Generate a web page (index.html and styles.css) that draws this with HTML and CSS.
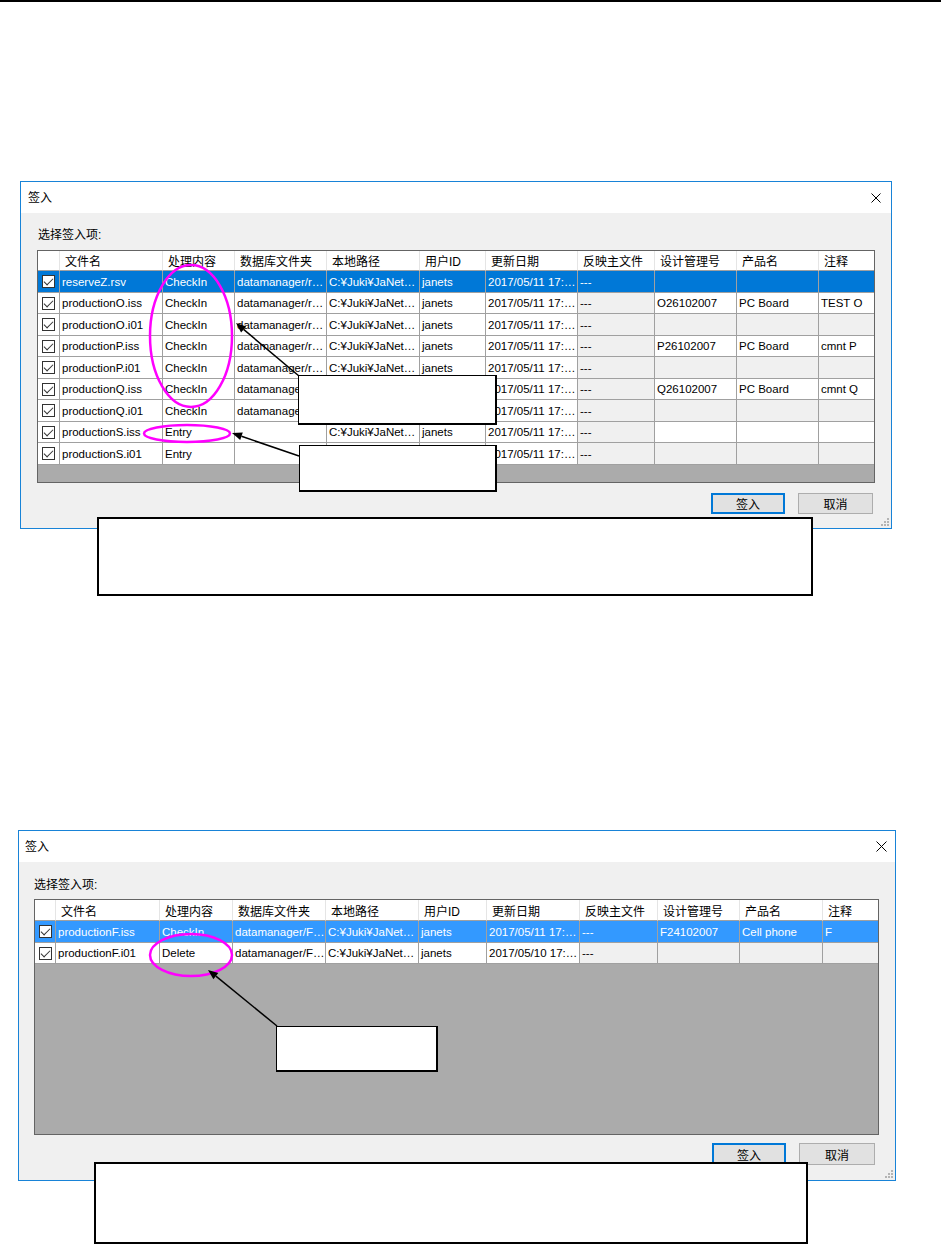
FILE: index.html
```html
<!DOCTYPE html>
<html lang="zh">
<head>
<meta charset="utf-8">
<title>签入</title>
<link rel="stylesheet" href="styles.css">
</head>
<body>
<div class="page">
  <div class="rule"></div>

  <section class="dialog d1">
    <header class="titlebar">
      <span class="title">签入</span>
      <svg class="close" width="10" height="10" viewBox="0 0 10 10"><path d="M0.5 0.5 L9.5 9.5 M9.5 0.5 L0.5 9.5" stroke="#000" stroke-width="1" fill="none"/></svg>
    </header>
    <div class="body">
      <div class="label">选择签入项:</div>
      <div class="grid">
        <div class="row head"><div></div><div>文件名</div><div>处理内容</div><div>数据库文件夹</div><div>本地路径</div><div>用户ID</div><div>更新日期</div><div>反映主文件</div><div>设计管理号</div><div>产品名</div><div>注释</div></div>
        <div class="row sel"><div class="ck"><span class="box"></span></div><div>reserveZ.rsv</div><div>CheckIn</div><div>datamanager/r…</div><div>C:¥Juki¥JaNet…</div><div>janets</div><div>2017/05/11 17:…</div><div>---</div><div></div><div></div><div></div></div>
        <div class="row"><div class="ck"><span class="box"></span></div><div>productionO.iss</div><div>CheckIn</div><div>datamanager/r…</div><div>C:¥Juki¥JaNet…</div><div>janets</div><div>2017/05/11 17:…</div><div class="g">---</div><div>O26102007</div><div>PC Board</div><div>TEST O</div></div>
        <div class="row"><div class="ck"><span class="box"></span></div><div>productionO.i01</div><div>CheckIn</div><div>datamanager/r…</div><div>C:¥Juki¥JaNet…</div><div>janets</div><div>2017/05/11 17:…</div><div class="g">---</div><div class="g"></div><div class="g"></div><div class="g"></div></div>
        <div class="row"><div class="ck"><span class="box"></span></div><div>productionP.iss</div><div>CheckIn</div><div>datamanager/r…</div><div>C:¥Juki¥JaNet…</div><div>janets</div><div>2017/05/11 17:…</div><div class="g">---</div><div>P26102007</div><div>PC Board</div><div>cmnt P</div></div>
        <div class="row"><div class="ck"><span class="box"></span></div><div>productionP.i01</div><div>CheckIn</div><div>datamanager/r…</div><div>C:¥Juki¥JaNet…</div><div>janets</div><div>2017/05/11 17:…</div><div class="g">---</div><div class="g"></div><div class="g"></div><div class="g"></div></div>
        <div class="row"><div class="ck"><span class="box"></span></div><div>productionQ.iss</div><div>CheckIn</div><div>datamanager/r…</div><div>C:¥Juki¥JaNet…</div><div>janets</div><div>2017/05/11 17:…</div><div class="g">---</div><div>Q26102007</div><div>PC Board</div><div>cmnt Q</div></div>
        <div class="row"><div class="ck"><span class="box"></span></div><div>productionQ.i01</div><div>CheckIn</div><div>datamanager/r…</div><div>C:¥Juki¥JaNet…</div><div>janets</div><div>2017/05/11 17:…</div><div class="g">---</div><div class="g"></div><div class="g"></div><div class="g"></div></div>
        <div class="row"><div class="ck"><span class="box"></span></div><div>productionS.iss</div><div>Entry</div><div></div><div>C:¥Juki¥JaNet…</div><div>janets</div><div>2017/05/11 17:…</div><div class="g">---</div><div></div><div></div><div></div></div>
        <div class="row"><div class="ck"><span class="box"></span></div><div>productionS.i01</div><div>Entry</div><div></div><div>C:¥Juki¥JaNet…</div><div>janets</div><div>2017/05/11 17:…</div><div class="g">---</div><div class="g"></div><div class="g"></div><div class="g"></div></div>
      </div>
      <div class="buttons">
        <button class="btn primary">签入</button>
        <button class="btn">取消</button>
      </div>
    </div>
    <svg class="grip" width="9" height="9" viewBox="0 0 9 9"><g fill="#b4b4b4"><rect x="7" y="1" width="2" height="2"/><rect x="4" y="4" width="2" height="2"/><rect x="7" y="4" width="2" height="2"/><rect x="1" y="7" width="2" height="2"/><rect x="4" y="7" width="2" height="2"/><rect x="7" y="7" width="2" height="2"/></g></svg>
  </section>

  <section class="dialog d2">
    <header class="titlebar">
      <span class="title">签入</span>
      <svg class="close" width="11" height="11" viewBox="0 0 11 11"><path d="M0.5 0.5 L10.5 10.5 M10.5 0.5 L0.5 10.5" stroke="#000" stroke-width="1" fill="none"/></svg>
    </header>
    <div class="body">
      <div class="label">选择签入项:</div>
      <div class="grid">
        <div class="row head"><div></div><div>文件名</div><div>处理内容</div><div>数据库文件夹</div><div>本地路径</div><div>用户ID</div><div>更新日期</div><div>反映主文件</div><div>设计管理号</div><div>产品名</div><div>注释</div></div>
        <div class="row sel2"><div class="ck"><span class="box"></span></div><div>productionF.iss</div><div>CheckIn</div><div>datamanager/F…</div><div>C:¥Juki¥JaNet…</div><div>janets</div><div>2017/05/11 17:…</div><div>---</div><div>F24102007</div><div>Cell phone</div><div>F</div></div>
        <div class="row"><div class="ck"><span class="box"></span></div><div>productionF.i01</div><div>Delete</div><div>datamanager/F…</div><div>C:¥Juki¥JaNet…</div><div>janets</div><div>2017/05/10 17:…</div><div class="g">---</div><div class="g"></div><div class="g"></div><div class="g"></div></div>
      </div>
      <div class="buttons">
        <button class="btn primary">签入</button>
        <button class="btn">取消</button>
      </div>
    </div>
    <svg class="grip" width="9" height="9" viewBox="0 0 9 9"><g fill="#b4b4b4"><rect x="7" y="1" width="2" height="2"/><rect x="4" y="4" width="2" height="2"/><rect x="7" y="4" width="2" height="2"/><rect x="1" y="7" width="2" height="2"/><rect x="4" y="7" width="2" height="2"/><rect x="7" y="7" width="2" height="2"/></g></svg>
  </section>

  <svg class="marks" width="941" height="1245" viewBox="0 0 941 1245">
    <g fill="none" stroke="#ff00ff" stroke-width="2.5">
      <ellipse cx="191" cy="336" rx="41" ry="71"/>
      <ellipse cx="187" cy="433.5" rx="43" ry="8.5"/>
      <ellipse cx="191" cy="955" rx="41" ry="21"/>
    </g>
    <g stroke="#000" stroke-width="1.5" fill="none">
      <line x1="299" y1="376" x2="243.6" y2="329.4"/>
      <line x1="299" y1="456" x2="241.5" y2="436.3"/>
      <line x1="277" y1="1026" x2="215.9" y2="976.2"/>
    </g>
    <g fill="#000">
      <polygon points="236,323 246.2,326.4 241.1,332.5"/>
      <polygon points="232,433 242.8,432.5 240.2,440.1"/>
      <polygon points="208,970 218.3,973 213.4,979.3"/>
    </g>
  </svg>

  <div class="callout c-a"></div>
  <div class="callout c-b"></div>
  <div class="callout wide c-c"></div>
  <div class="callout c-d"></div>
  <div class="callout wide c-e"></div>
</div>
</body>
</html>
```

FILE: styles.css
```css
* { box-sizing: border-box; }
html, body { margin: 0; padding: 0; background: #fff; }
body {
  font-family: "Liberation Sans", "Noto Sans CJK SC", sans-serif;
  font-size: 12px;
  color: #000;
}
.page {
  position: relative;
  width: 941px;
  height: 1245px;
  overflow: hidden;
}
.rule {
  height: 2px;
  background: #000;
}

/* dialog */
.dialog {
  position: relative;
  border: 1px solid #1883d7;
  background: #f0f0f0;
}
.d1 { width: 872px; margin: 179px 0 0 20px; }
.d2 { width: 878px; margin: 301px 0 0 18px; }

.titlebar {
  height: 31px;
  background: #fff;
  display: flex;
  align-items: center;
  justify-content: space-between;
}
.d1 .titlebar { padding: 0 10px 0 7px; }
.d2 .titlebar { padding: 0 8px 0 6px; }
.title { font-size: 12px; line-height: 16px; }
.close { display: block; }

.body { display: flex; flex-direction: column; }
.d1 .body { padding: 14px 16px 14px 16px; }
.d2 .body { padding: 15px 16px 15px 15px; }

.label { height: 16px; line-height: 16px; }
.d1 .label { margin: 0 0 7px 1px; }
.d2 .label { margin: 0 0 6px 0; }

/* grid */
.grid {
  border: 1px solid #646464;
  background: #ababab;
  display: flex;
  flex-direction: column;
}
.d1 .grid { height: 233px; }
.d2 .grid { height: 236px; }

.row { display: grid; flex: none; height: 21px; font-size: 11.5px; }
.row:nth-child(even) { height: 22px; }
.d1 .row { grid-template-columns: 22px 103px 72px 92px 93px 66px 92px 77px 82px 82px 55px; }
.d2 .row { grid-template-columns: 21px 104px 73px 93px 93px 68px 93px 78px 82px 83px 55px; }

.row > div {
  background: #fff;
  border-right: 1px solid #a0a0a0;
  border-bottom: 1px solid #a0a0a0;
  padding-left: 2px;
  white-space: nowrap;
  overflow: hidden;
  display: flex;
  align-items: center;
}
.row > div:last-child { border-right: none; }
.row > div.g { background: #f0f0f0; }

.row.head { height: 20px; font-size: 12px; }
.d2 .row.head { height: 21px; }
.row.head > div { padding-left: 5px; border-right-color: #e5e5e5; }

.row.sel > div { background: #0078d7; color: #fff; }
.row.sel2 > div { background: #3399ff; color: #fff; }

.row > div.ck { justify-content: center; padding-left: 0; }
.box {
  position: relative;
  display: block;
  width: 13px;
  height: 13px;
  border: 1px solid #333;
  background: #fff;
}
.box::after {
  content: "";
  position: absolute;
  left: 3px;
  top: 0px;
  width: 4px;
  height: 8px;
  border-right: 1px solid #333;
  border-bottom: 1px solid #333;
  transform: rotate(45deg);
}

/* buttons */
.buttons { display: flex; justify-content: flex-end; gap: 13px; }
.d1 .buttons { margin-top: 10px; padding-right: 2px; }
.d2 .buttons { margin-top: 8px; padding-right: 4px; }
.btn {
  width: 75px;
  height: 21px;
  padding: 0;
  margin: 0;
  background: #e1e1e1;
  border: 1px solid #adadad;
  font: 12px "Liberation Sans", "Noto Sans CJK SC", sans-serif;
  color: #000;
  display: flex;
  align-items: center;
  justify-content: center;
}
.d2 .btn { height: 22px; width: 76px; }
.btn.primary { border: 2px solid #0078d7; width: 74px; }
.d2 .btn.primary { width: 74px; }

.grip { position: absolute; right: 2px; bottom: 2px; }

/* annotations over the page */
.marks { position: absolute; left: 0; top: 0; }
.callout {
  position: absolute;
  background: #fff;
  border-style: solid;
  border-color: #000;
  border-width: 1px 2px 2px 1px;
}
.callout.wide { border-width: 2px; }
.c-a { left: 298px; top: 375px; width: 199px; height: 50px; }
.c-b { left: 299px; top: 445px; width: 198px; height: 47px; }
.c-c { left: 97px; top: 517px; width: 716px; height: 79px; }
.c-d { left: 276px; top: 1026px; width: 162px; height: 46px; }
.c-e { left: 94px; top: 1162px; width: 714px; height: 82px; }
```
